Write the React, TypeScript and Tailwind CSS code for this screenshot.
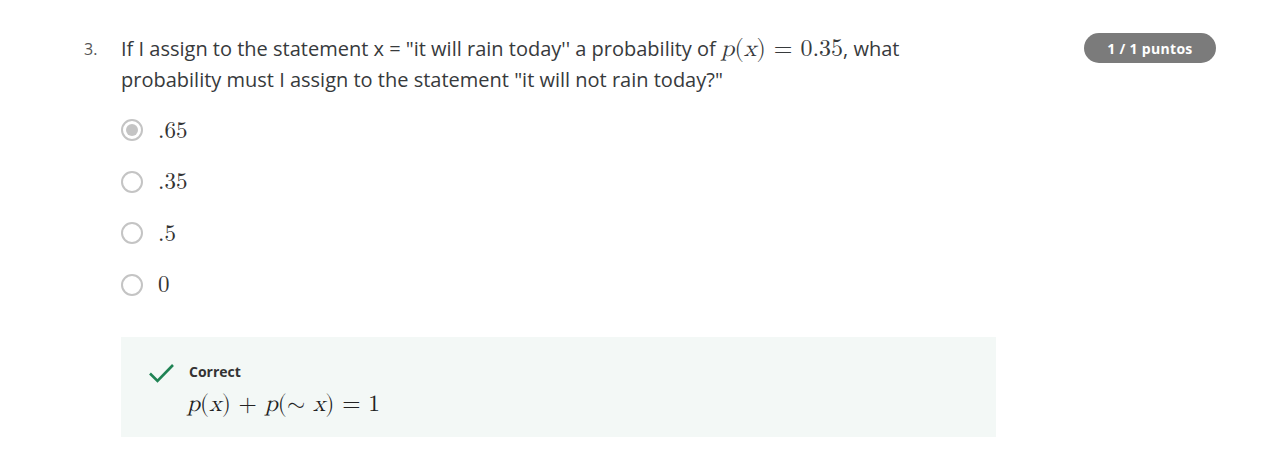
import React from "react";

const serif = { fontFamily: '"Latin Modern Math", "Liberation Serif", "DejaVu Serif", serif' };

function Radio({ checked }: { checked?: boolean }) {
  return (
    <span className="flex h-[22px] w-[22px] shrink-0 items-center justify-center rounded-full border-2 border-[#c4c4c4] bg-white">
      {checked && <span className="h-[12px] w-[12px] rounded-full bg-[#c4c4c4]" />}
    </span>
  );
}

export default function App() {
  const options = [".65", ".35", ".5", "0"];
  return (
    <div className="min-h-[467px] w-[1264px] bg-white font-['Open_Sans',sans-serif] text-[#333333]">
      <div className="flex pl-[84px] pr-[48px] pt-[33px]">
        <div className="w-[37px] pt-[3px] text-[16px] leading-[26px] text-[#555]">3.</div>
        <div className="flex-1">
          <div className="flex items-start justify-between">
            <p className="w-[800px] text-[20px] leading-[31px] text-[#373a3c]">
              If I assign to the statement x = "it will rain today'' a probability of{" "}
              <span className="text-[24px] leading-[20px]" style={serif}>
                <i>p</i>(<i>x</i>) = 0.35
              </span>
              , what probability must I assign to the statement "it will not rain today?"
            </p>
            <span className="flex h-[30px] w-[132px] items-center justify-center rounded-full bg-[#7b7b7b] text-[14px] font-bold tracking-[0.3px] text-white">
              1 / 1 puntos
            </span>
          </div>
          <div className="mt-[24px] flex flex-col gap-[29.5px]">
            {options.map((o, i) => (
              <div key={o} className="flex h-[22px] items-center gap-[15px]">
                <Radio checked={i === 0} />
                <span className="text-[23px] leading-none text-[#333]" style={serif}>
                  {o}
                </span>
              </div>
            ))}
          </div>
          <div className="mt-[41px] w-[875px] bg-[#f3f8f6] pb-[18px] pl-[27px] pt-[24px]">
            <div className="flex items-start gap-[14px]">
              <svg width="27" height="22" viewBox="0 0 27 22" className="mt-[1px]">
                <path d="M2 11.5 L9.5 19 L25 3" fill="none" stroke="#1f8354" strokeWidth="2.6" />
              </svg>
              <div>
                <div className="text-[14px] font-bold leading-[22px] text-[#333]">Correct</div>
                <div className="-ml-[2px] mt-[6px] whitespace-nowrap text-[23.5px] leading-[30px] text-[#222]" style={serif}>
                  <i>p</i>(<i>x</i>) + <i>p</i>(∼ <i>x</i>) = 1
                </div>
              </div>
            </div>
          </div>
        </div>
      </div>
    </div>
  );
}
